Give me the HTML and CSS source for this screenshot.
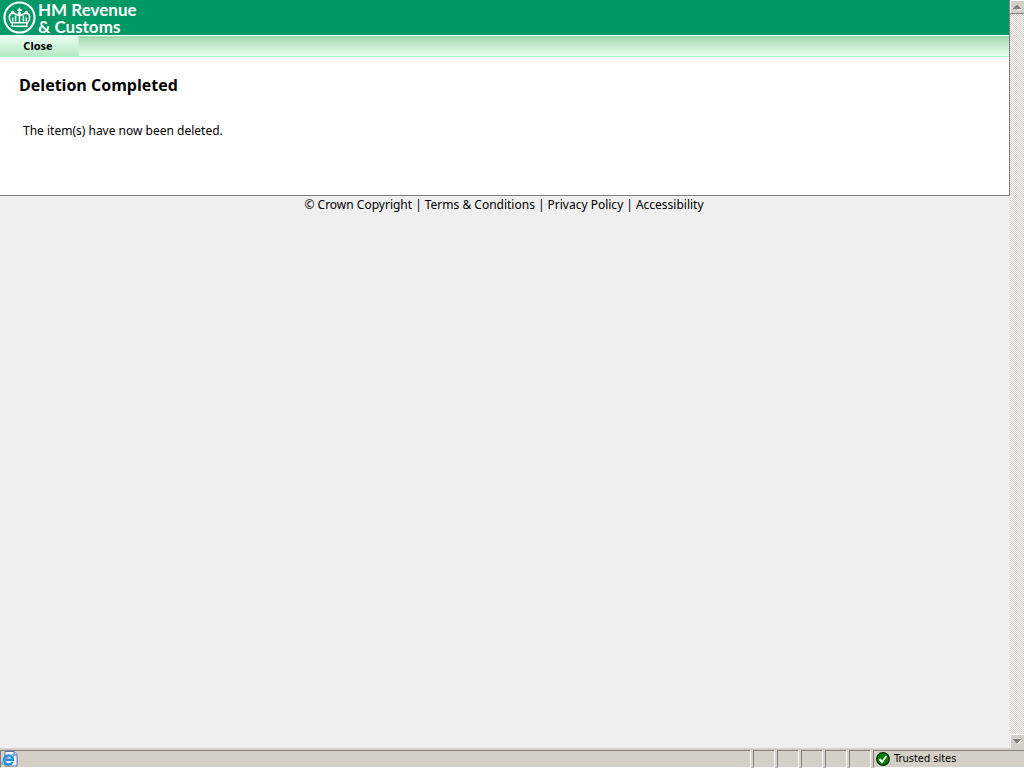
FILE: index.html
```html
<!DOCTYPE html>
<html lang="en">
<head>
<meta charset="utf-8">
<title>Deletion Completed - HM Revenue &amp; Customs</title>
<link rel="stylesheet" href="styles.css">
</head>
<body>
<div class="window">
  <div class="viewport">
    <div class="page">
      <div class="sheet">
        <header class="banner">
          <svg class="crest" viewBox="0 0 34 34" aria-hidden="true">
            <circle cx="17" cy="17" r="15.5" fill="none" stroke="#fff" stroke-width="2.2"/>
            <g fill="none" stroke="#fff" stroke-width="1.6">
              <path d="M9 23C5 18 6 13 10 12.500C13 12.500 14 15 17 15C20 15 21 12.500 24 12.500C28 13 29 18 25 23"/>
              <path d="M17 7V22M14.500 9.500H19.500M13 15V21M21 15V21M10 17V21M24 17V21"/>
              <path d="M9.500 22.500H24.500V26H9.500Z"/>
            </g>
            <g fill="#fff"><circle cx="17" cy="12.500" r="1.600"/><circle cx="10" cy="11.500" r="1.500"/><circle cx="24" cy="11.500" r="1.500"/></g>
          </svg>
          <div class="brand">HM Revenue<br>&amp; Customs</div>
        </header>
        <nav class="menu"><button class="close" type="button">Close</button></nav>
        <main class="content">
          <h1>Deletion Completed</h1>
          <p>The item(s) have now been deleted.</p>
        </main>
      </div>
      <footer class="legal">
        <a href="#copyright">© Crown Copyright</a><span>|</span><a href="#terms">Terms &amp; Conditions</a><span>|</span><a href="#privacy">Privacy Policy</a><span>|</span><a href="#accessibility">Accessibility</a>
      </footer>
    </div>
    <div class="scrollbar">
      <button class="arrow up" type="button" aria-label="Scroll up"><svg viewBox="0 0 9 5" shape-rendering="crispEdges"><path d="M1 5H9V4H8Z" fill="#fff"/><path d="M3 0H5V1H6V2H7V3H8V4H0V3H1V2H2V1H3Z" fill="#808080"/></svg></button>
      <button class="arrow down" type="button" aria-label="Scroll down"><svg viewBox="0 0 9 5" shape-rendering="crispEdges"><path d="M8 1H9V2H8V3H7V4H6V5H4V4H5V3H6V2H7V1Z" fill="#fff"/><path d="M0 0H8V1H7V2H6V3H5V4H3V3H2V2H1V1H0Z" fill="#808080"/></svg></button>
    </div>
  </div>
  <div class="status">
    <div class="cell message">
      <svg viewBox="0 0 17 16" aria-hidden="true">
        <path d="M4 .5H13L16 3.500V15H4Z" fill="#f4f9ff" stroke="#5673b0"/>
        <path d="M13 .5V4H16" fill="#c6dcf5" stroke="#5673b0"/>
        <path d="M11.500 11A4.500 4.500 0 1 1 12 8.700H4" fill="none" stroke="#268bd2" stroke-width="2.400"/>
        <path d="M2 13C-1 15 3 7 11 4C13 3.500 12.500 5 12 6" fill="none" stroke="#4ba5e3" stroke-width="1.200"/>
      </svg>
    </div>
    <div class="cell"></div><div class="cell"></div><div class="cell"></div><div class="cell"></div><div class="cell"></div>
    <div class="cell zone">
      <svg viewBox="0 0 14 14" aria-hidden="true"><circle cx="7" cy="7" r="6.300" fill="#008000" stroke="#042504" stroke-width="1.200"/><path d="M3.500 7L6 10L10.500 4" fill="none" stroke="#fff" stroke-width="2"/></svg>
      <span>Trusted sites</span>
    </div>
  </div>
</div>
</body>
</html>
```
FILE: styles.css
```css
* { box-sizing: border-box; }
body {
  margin: 0;
  background: #efefef;
  color: #000;
  font: 12px/16px "Noto Sans", "Open Sans", sans-serif;
}
button { margin: 0; padding: 0; border: 0; font: inherit; color: inherit; }
.window { display: flex; flex-direction: column; height: 100vh; }
.viewport { display: flex; flex: 1; min-height: 0; }
.page { flex: 1; overflow: hidden; }
.sheet {
  background: #fff;
  border-right: 1px solid #808080;
  border-bottom: 1px solid #808080;
}
.banner {
  display: flex;
  align-items: center;
  height: 35px;
  padding-left: 3px;
  gap: 2px;
  background: #009966;
  color: #fff;
}
.crest { width: 33px; height: 33px; }
.brand { padding-top: 1px; font: 700 17px/17px Lato, sans-serif; white-space: nowrap; }
.menu {
  display: flex;
  height: 22px;
  border-top: 1px solid #fff;
  border-bottom: 1px solid #b4f5c8;
  background: linear-gradient(#a0d8ac, #e8fff0);
}
.close {
  width: 79px;
  border-right: 1px solid #c4f5d2;
  background: linear-gradient(#eafff1, #b6e8c4);
  font: 700 11px/18px "Noto Sans", sans-serif;
  padding-right: 2px;
}
.content { padding: 16px 19px 56px; }
h1 { margin: 0; font: 700 16px/24px "Open Sans", sans-serif; }
.content p { margin: 26px 0 0; padding-left: 4px; }
.legal {
  display: flex;
  justify-content: center;
  gap: 3px;
  padding: 1px 2px 0 0;
}
.legal a { color: inherit; text-decoration: none; }
.scrollbar {
  display: flex;
  flex-direction: column;
  justify-content: space-between;
  width: 14px;
  background: repeating-conic-gradient(#fff 0 25%, #d4d0c8 0 50%) 0 0 / 2px 2px;
}
.arrow {
  display: flex;
  align-items: center;
  justify-content: center;
  height: 14px;
  background: #d4d0c8;
  border-left: 1px solid #fff;
  border-top: 1px solid #fff;
}
.up { border-bottom: 1px solid #808080; }
.arrow svg { width: 9px; height: 5px; }
.status {
  display: flex;
  gap: 2px;
  height: 20px;
  padding: 2px 0 0;
  background: #d4d0c8;
}
.cell {
  width: 22px;
  border: 1px solid #808080;
  border-right-color: #fff;
  border-bottom-color: #fff;
}
.message { flex: 1; }
.message svg { display: block; width: 17px; height: 16px; }
.zone {
  display: flex;
  align-items: center;
  gap: 4px;
  width: 151px;
  padding-left: 2px;
  border-right: 0;
  font: 11px/16px "DejaVu Sans Condensed", "Noto Sans", sans-serif;
}
.zone svg { width: 14px; height: 14px; }
```
